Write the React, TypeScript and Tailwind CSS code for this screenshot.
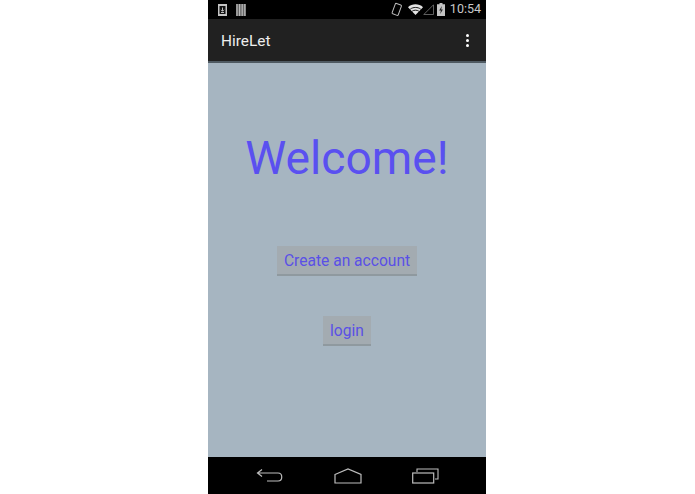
const App = () => {
  return (
    <div className="h-[494px] w-[695px] bg-white flex pl-[208px] font-['Roboto',sans-serif]">
      <div className="w-[278px] h-full flex flex-col bg-[#a6b5c1]">
        {/* Status bar */}
        <div className="h-[19px] bg-black flex items-center pl-[10px] pr-[5px] shrink-0">
          <svg width="9" height="12" viewBox="0 0 9 12" className="mr-[9px]">
            <rect x="0" y="0" width="9" height="12" fill="#c4c4c4" />
            <rect x="1.5" y="2" width="6" height="8" fill="#111" />
            <path d="M4.5 3.5v3.5M3 5.8l1.5 1.5L6 5.8M3 8.5h3" stroke="#d0d0d0" strokeWidth="0.9" fill="none" />
          </svg>
          <svg width="10" height="12" viewBox="0 0 10 12">
            <rect width="10" height="12" fill="#666" />
            <path d="M1 0v12M3.6 0v12M6.2 0v12M8.8 0v12" stroke="#b8b8b8" strokeWidth="1.2" />
          </svg>
          <div className="ml-auto flex items-center">
            <svg width="12" height="15" viewBox="0 0 12 15" className="mr-[5px]">
              <rect x="2.5" y="2" width="6.5" height="11" rx="1" transform="rotate(20 6 7.5)" fill="none" stroke="#bdbdbd" strokeWidth="1" />
            </svg>
            <svg width="15" height="11" viewBox="0 0 15 11">
              <path d="M0 3.2C4-.6 11-.6 15 3.2L7.5 11Z" fill="#e4e4e4" />
              <path d="M2.3 5.1C5.2 2.9 9.8 2.9 12.7 5.1" stroke="#000" strokeWidth="0.9" fill="none" />
              <path d="M4.2 7.1C6 5.9 9 5.9 10.8 7.1" stroke="#000" strokeWidth="0.9" fill="none" />
            </svg>
            <svg width="11" height="11" viewBox="0 0 11 11" className="mr-[3px]">
              <path d="M10.5 0.8V10.5H0.8Z" fill="none" stroke="#777" strokeWidth="0.8" />
            </svg>
            <svg width="8" height="13" viewBox="0 0 8 13" className="mr-[5px]">
              <path d="M2.5 0h3v1.2H8V13H0V1.2h2.5Z" fill="#c4c4c4" />
              <path d="M4.8 3 2.2 7.4h1.7L3.2 11l2.7-4.6H4.2Z" fill="#222" />
            </svg>
            <span className="text-[12.5px] leading-none text-[#c8c8c8]">10:54</span>
          </div>
        </div>

        {/* Action bar */}
        <div className="h-[44px] bg-[#212121] flex items-center pl-[13px] pr-[17px] shrink-0 border-b-2 border-[#4f5a62]">
          <span className="text-[15.4px] text-[#eeeeee] pt-[3px]">HireLet</span>
          <div className="ml-auto flex flex-col gap-[2px]">
            <div className="w-[3px] h-[3px] bg-white rounded-full" />
            <div className="w-[3px] h-[3px] bg-white rounded-full" />
            <div className="w-[3px] h-[3px] bg-white rounded-full" />
          </div>
        </div>

        {/* Content */}
        <div className="flex-1 flex flex-col items-center">
          <h1 className="mt-[63px] text-[46.2px] leading-[64px] font-normal text-[#5a50f0]">Welcome!</h1>
          <button className="mt-[56px] h-[30px] px-[7px] pt-[3px] bg-[#a3abb1] border-b-2 border-[#8f999f] text-[15.6px] text-[#5a50e6]">
            Create an account
          </button>
          <button className="mt-[40px] h-[30px] px-[7px] pt-[3px] bg-[#a3abb1] border-b-2 border-[#8f999f] text-[15.6px] text-[#5a50e6]">
            login
          </button>
        </div>

        {/* Nav bar */}
        <div className="h-[37px] bg-black flex items-center justify-center gap-[50px] shrink-0">
          <svg width="28" height="16" viewBox="0 0 28 16">
            <path d="M6 1.5 1.5 5 6 8.5M1.5 5H22c5 0 5 8 0 8H11" fill="none" stroke="#bdbdbd" strokeWidth="1.2" />
          </svg>
          <svg width="28" height="16" viewBox="0 0 28 16">
            <path d="M1 6.5 14 1l13 5.5V15H1Z" fill="none" stroke="#bdbdbd" strokeWidth="1.2" />
          </svg>
          <svg width="27" height="16" viewBox="0 0 27 16">
            <path d="M5 4V1h21v10h-3" fill="none" stroke="#bdbdbd" strokeWidth="1.1" />
            <rect x="0.7" y="5" width="21" height="10" fill="none" stroke="#bdbdbd" strokeWidth="1.2" />
          </svg>
        </div>
      </div>
    </div>
  );
};

export default App;
